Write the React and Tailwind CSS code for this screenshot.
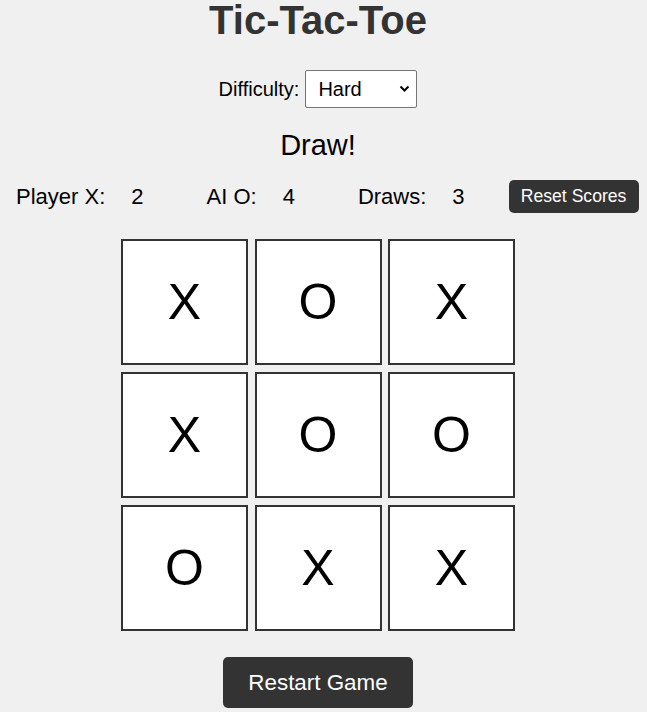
import { useState } from "react";

const BOARD = ["X", "O", "X", "X", "O", "O", "O", "X", "X"];

const ScoreItem = ({ label, value }) => (
  <div className="flex items-center gap-[26px]">
    <span>{label}</span>
    <span>{value}</span>
  </div>
);

const App = () => {
  const [difficulty, setDifficulty] = useState("hard");

  return (
    <div
      className="min-h-screen w-full bg-[#f0f0f0] text-black"
      style={{ fontFamily: '"Liberation Sans", Arial, sans-serif' }}
    >
      <div className="w-[636px] flex flex-col items-center">
        {/* title */}
        <h1 className="text-[40px] leading-[40px] font-bold text-[#333]">Tic-Tac-Toe</h1>

        {/* difficulty */}
        <div className="mt-[30px] flex items-center gap-[6px] text-[20px]">
          <label htmlFor="difficulty">Difficulty:</label>
          <div className="relative">
            <select
              id="difficulty"
              value={difficulty}
              onChange={(e) => setDifficulty(e.target.value)}
              className="appearance-none w-[112px] h-[38px] bg-white border border-[#767676] rounded-[2px] pl-[12px] text-[20px] text-black"
            >
              <option value="easy">Easy</option>
              <option value="medium">Medium</option>
              <option value="hard">Hard</option>
            </select>
            <svg
              className="absolute right-[7px] top-[15px] pointer-events-none"
              width="11"
              height="8"
              viewBox="0 0 11 8"
            >
              <path d="M1.5 1.5 L5.5 5.5 L9.5 1.5" fill="none" stroke="#000" strokeWidth="2" />
            </svg>
          </div>
        </div>

        {/* status */}
        <div className="mt-[20px] text-[29px] leading-[34px]">Draw!</div>

        {/* scores */}
        <div className="mt-[18px] self-start ml-[16px] flex items-center text-[22px] whitespace-nowrap gap-[63px]">
          <ScoreItem label="Player X:" value="2" />
          <ScoreItem label="AI O:" value="4" />
          <ScoreItem label="Draws:" value="3" />
          <button className="-ml-[19px] h-[33px] w-[130px] rounded-[5px] bg-[#333] text-white text-[17.6px]">
            Reset Scores
          </button>
        </div>

        {/* board */}
        <div className="mt-[26px] grid grid-cols-[repeat(3,127px)] gap-x-[6.5px] gap-y-[7px]">
          {BOARD.map((v, i) => (
            <div
              key={i}
              className="h-[126px] bg-white border-2 border-[#333] flex items-center justify-center text-[50px] leading-none"
            >
              {v}
            </div>
          ))}
        </div>

        {/* restart */}
        <button className="mt-[26px] h-[51px] w-[190px] rounded-[5px] bg-[#333] text-white text-[22.4px]">
          Restart Game
        </button>
      </div>
    </div>
  );
};

export default App;
